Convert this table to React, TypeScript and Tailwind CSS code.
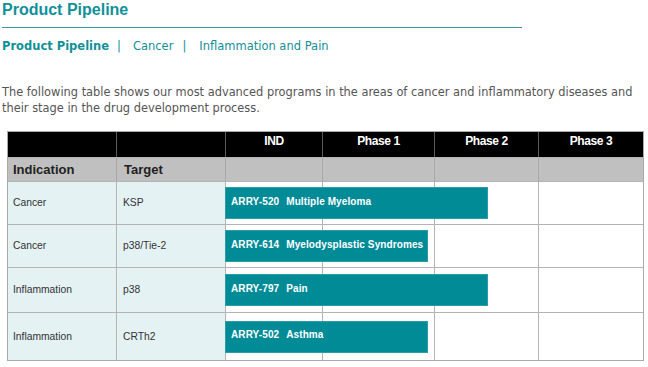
const rows = [
  { indication: 'Cancer', target: 'KSP', code: 'ARRY-520', name: 'Multiple Myeloma', width: 263, height: 'h-[42px]' },
  { indication: 'Cancer', target: 'p38/Tie-2', code: 'ARRY-614', name: 'Myelodysplastic Syndromes', width: 203, height: 'h-[42px]' },
  { indication: 'Inflammation', target: 'p38', code: 'ARRY-797', name: 'Pain', width: 263, height: 'h-[44px]' },
  { indication: 'Inflammation', target: 'CRTh2', code: 'ARRY-502', name: 'Asthma', width: 203, height: 'h-[47px]' },
];

const phases = ['IND', 'Phase 1', 'Phase 2', 'Phase 3'];

const cols = 'grid grid-cols-[108px_108px_96px_111px_103px_104px] gap-x-px';

export default function App() {
  return (
    <div className="w-[648px] h-[367px] bg-white overflow-hidden">
      <h1 className="pl-[2px] text-[16px] leading-[20px] font-bold text-[#11909a] font-['Liberation_Sans',Arial,sans-serif]">
        Product Pipeline
      </h1>
      <div className="ml-[2px] mt-[7px] w-[520px] h-px bg-[#3a9ba3]" />

      <nav className="mt-[10px] pl-[2px] text-[11.5px] leading-[16px] text-[#11909a] font-['DejaVu_Sans',Verdana,sans-serif] flex items-center">
        <span className="font-bold">Product Pipeline</span>
        <span className="ml-[8px] mr-[12px]">|</span>
        <span>Cancer</span>
        <span className="ml-[9px] mr-[13px]">|</span>
        <span>Inflammation and Pain</span>
      </nav>

      <p className="mt-[30px] pl-[2px] w-[640px] text-[11.4px] leading-[16px] text-[#555] font-['DejaVu_Sans',Verdana,sans-serif]">
        The following table shows our most advanced programs in the areas of cancer and inflammatory diseases and their stage in the drug development process.
      </p>

      <div className="ml-[7px] mt-[15px] w-[637px] border border-[#aaaaaa] bg-[#b4b4b4] flex flex-col gap-y-px font-['Liberation_Sans',Arial,sans-serif]">
        {/* phase header */}
        <div className={`${cols} h-[25px] bg-[#5a5a5a]`}>
          <div className="bg-black" />
          <div className="bg-black" />
          {phases.map((p) => (
            <div key={p} className="bg-black text-white text-[12px] leading-[14px] font-bold tracking-[-0.4px] text-center pt-[2px]">
              {p}
            </div>
          ))}
        </div>

        {/* column labels */}
        <div className={`${cols} h-[23px] bg-[#a8a8a8]`}>
          <div className="bg-[#c0c0c0] pl-[5px] flex items-center text-[13px] font-bold text-[#222]">Indication</div>
          <div className="bg-[#c0c0c0] pl-[7px] flex items-center text-[13px] font-bold text-[#222]">Target</div>
          <div className="bg-[#c0c0c0]" />
          <div className="bg-[#c0c0c0]" />
          <div className="bg-[#c0c0c0]" />
          <div className="bg-[#c0c0c0]" />
        </div>

        {rows.map((r) => (
          <div key={r.code} className={`${cols} ${r.height}`}>
            <div className="row-start-1 col-start-1 bg-[#e4f2f3] pl-[5px] flex items-center text-[10.3px] text-[#333]">
              {r.indication}
            </div>
            <div className="row-start-1 col-start-2 bg-[#e4f2f3] pl-[6px] flex items-center text-[10.3px] text-[#333]">
              {r.target}
            </div>
            <div className="row-start-1 col-start-3 bg-white" />
            <div className="row-start-1 col-start-4 bg-white" />
            <div className="row-start-1 col-start-5 bg-white" />
            <div className="row-start-1 col-start-6 bg-white" />
            <div
              className="row-start-1 col-start-3 col-span-4 self-center justify-self-start -ml-px h-[32px] bg-[#008b97] border border-[#2a9da6] flex items-center pl-[5px] pb-[4px] text-white text-[10px] font-bold tracking-[0.1px] whitespace-nowrap"
              style={{ width: r.width }}
            >
              <span>{r.code}</span>
              <span className="ml-[7px]">{r.name}</span>
            </div>
          </div>
        ))}
      </div>
    </div>
  );
}
